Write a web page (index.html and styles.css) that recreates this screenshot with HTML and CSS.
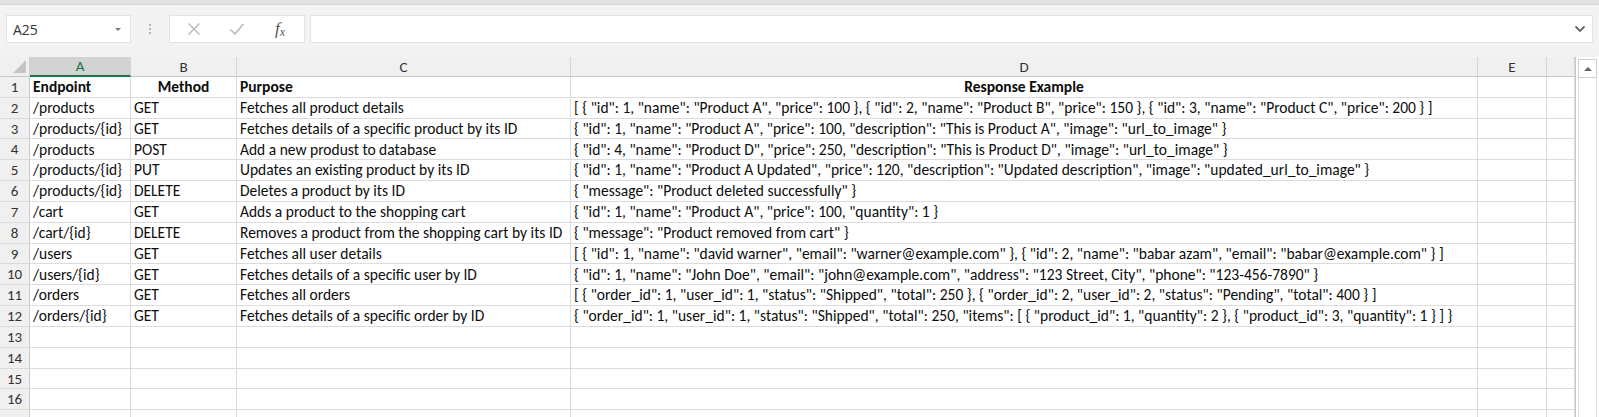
FILE: index.html
```html
<!DOCTYPE html>
<html>
<head>
<meta charset="utf-8">
<link rel="stylesheet" href="styles.css">
</head>
<body>
<div class="app">
  <div class="topstrip"></div>
  <div class="fbar">
    <div class="namebox"><span class="nb-text">A25</span><span class="nb-arrow"></span></div>
    <div class="dots"><i></i><i></i><i></i></div>
    <div class="tools">
      <svg class="ico" width="14" height="14" viewBox="0 0 14 14"><path d="M1.5 1.5 L12.5 12.5 M12.5 1.5 L1.5 12.5" stroke="#b3b3b3" stroke-width="1.3" fill="none"/></svg>
      <svg class="ico" width="16" height="14" viewBox="0 0 16 14"><path d="M1.5 7.5 L6 12 L14.5 2" stroke="#b3b3b3" stroke-width="1.4" fill="none"/></svg>
      <span class="fx">f<sub>x</sub></span>
    </div>
    <div class="finput">
      <svg class="chev" width="12" height="8" viewBox="0 0 12 8"><path d="M1.5 1.5 L6 6 L10.5 1.5" stroke="#666" stroke-width="1.8" fill="none"/></svg>
    </div>
  </div>
  <div class="gridwrap">
    <div class="sheet">
      <div class="corner"><span class="tri"></span></div>
      <div class="ch sel">A</div>
      <div class="ch">B</div>
      <div class="ch">C</div>
      <div class="ch">D</div>
      <div class="ch">E</div>
      <div class="ch"></div>

      <div class="rh">1</div><div class="c b">Endpoint</div><div class="c b ctr">Method</div><div class="c b">Purpose</div><div class="c b ctr">Response Example</div><div class="c"></div><div class="c"></div>
      <div class="rh">2</div><div class="c">/products</div><div class="c">GET</div><div class="c">Fetches all product details</div><div class="c">[ { "id": 1, "name": "Product A", "price": 100 }, { "id": 2, "name": "Product B", "price": 150 }, { "id": 3, "name": "Product C", "price": 200 } ]</div><div class="c"></div><div class="c"></div>
      <div class="rh">3</div><div class="c">/products/{id}</div><div class="c">GET</div><div class="c">Fetches details of a specific product by its ID</div><div class="c">{ "id": 1, "name": "Product A", "price": 100, "description": "This is Product A", "image": "url_to_image" }</div><div class="c"></div><div class="c"></div>
      <div class="rh">4</div><div class="c">/products</div><div class="c">POST</div><div class="c">Add a new produst to database</div><div class="c">{ "id": 4, "name": "Product D", "price": 250, "description": "This is Product D", "image": "url_to_image" }</div><div class="c"></div><div class="c"></div>
      <div class="rh">5</div><div class="c">/products/{id}</div><div class="c">PUT</div><div class="c">Updates an existing product by its ID</div><div class="c">{ "id": 1, "name": "Product A Updated", "price": 120, "description": "Updated description", "image": "updated_url_to_image" }</div><div class="c"></div><div class="c"></div>
      <div class="rh">6</div><div class="c">/products/{id}</div><div class="c">DELETE</div><div class="c">Deletes a product by its ID</div><div class="c">{ "message": "Product deleted successfully" }</div><div class="c"></div><div class="c"></div>
      <div class="rh">7</div><div class="c">/cart</div><div class="c">GET</div><div class="c">Adds a product to the shopping cart</div><div class="c">{ "id": 1, "name": "Product A", "price": 100, "quantity": 1 }</div><div class="c"></div><div class="c"></div>
      <div class="rh">8</div><div class="c">/cart/{id}</div><div class="c">DELETE</div><div class="c">Removes a product from the shopping cart by its ID</div><div class="c">{ "message": "Product removed from cart" }</div><div class="c"></div><div class="c"></div>
      <div class="rh">9</div><div class="c">/users</div><div class="c">GET</div><div class="c">Fetches all user details</div><div class="c">[ { "id": 1, "name": "david warner", "email": "warner@example.com" }, { "id": 2, "name": "babar azam", "email": "babar@example.com" } ]</div><div class="c"></div><div class="c"></div>
      <div class="rh">10</div><div class="c">/users/{id}</div><div class="c">GET</div><div class="c">Fetches details of a specific user by ID</div><div class="c">{ "id": 1, "name": "John Doe", "email": "john@example.com", "address": "123 Street, City", "phone": "123-456-7890" }</div><div class="c"></div><div class="c"></div>
      <div class="rh">11</div><div class="c">/orders</div><div class="c">GET</div><div class="c">Fetches all orders</div><div class="c">[ { "order_id": 1, "user_id": 1, "status": "Shipped", "total": 250 }, { "order_id": 2, "user_id": 2, "status": "Pending", "total": 400 } ]</div><div class="c"></div><div class="c"></div>
      <div class="rh">12</div><div class="c">/orders/{id}</div><div class="c">GET</div><div class="c">Fetches details of a specific order by ID</div><div class="c">{ "order_id": 1, "user_id": 1, "status": "Shipped", "total": 250, "items": [ { "product_id": 1, "quantity": 2 }, { "product_id": 3, "quantity": 1 } ] }</div><div class="c"></div><div class="c"></div>
      <div class="rh">13</div><div class="c"></div><div class="c"></div><div class="c"></div><div class="c"></div><div class="c"></div><div class="c"></div>
      <div class="rh">14</div><div class="c"></div><div class="c"></div><div class="c"></div><div class="c"></div><div class="c"></div><div class="c"></div>
      <div class="rh">15</div><div class="c"></div><div class="c"></div><div class="c"></div><div class="c"></div><div class="c"></div><div class="c"></div>
      <div class="rh">16</div><div class="c"></div><div class="c"></div><div class="c"></div><div class="c"></div><div class="c"></div><div class="c"></div>
      <div class="rh"></div><div class="c"></div><div class="c"></div><div class="c"></div><div class="c"></div><div class="c"></div><div class="c"></div>
    </div>
    <div class="vscroll">
      <div class="sbtn"><span class="up"></span></div>
      <div class="track"></div>
    </div>
  </div>
</div>
</body>
</html>
```

FILE: styles.css
```css
* { box-sizing: border-box; }
html, body { margin: 0; padding: 0; }
body {
  width: 1599px;
  height: 417px;
  overflow: hidden;
  background: #f3f3f3;
  font-family: Carlito, Lato, "Liberation Sans", sans-serif;
}
.app { display: flex; flex-direction: column; }
.topstrip {
  height: 5px;
  background: #e2e2e2;
  border-bottom: 1px solid #d6d6d6;
}
.fbar {
  display: flex;
  align-items: stretch;
  height: 28px;
  margin-top: 10px;
  padding-left: 6px;
  padding-right: 6px;
}
.namebox {
  width: 125px;
  background: #fff;
  border: 1px solid #e3e3e3;
  display: flex;
  align-items: center;
  justify-content: space-between;
  padding: 0 9px 0 6px;
}
.nb-text {
  font-family: "Open Sans", "Noto Sans", sans-serif;
  font-size: 14px;
  color: #333;
}
.nb-arrow {
  width: 0; height: 0;
  border-left: 3px solid transparent;
  border-right: 3px solid transparent;
  border-top: 3px solid #777;
}
.dots {
  width: 38px;
  display: flex;
  flex-direction: column;
  align-items: center;
  justify-content: center;
  gap: 2px;
}
.dots i {
  display: block;
  width: 2px; height: 2px;
  background: #b5b5b5;
}
.tools {
  width: 136px;
  background: #fff;
  border: 1px solid #e3e3e3;
  display: flex;
  align-items: center;
  padding-left: 17px;
  gap: 28px;
}
.fx {
  font-family: "Liberation Serif", "DejaVu Serif", serif;
  font-style: italic;
  font-size: 17px;
  color: #555;
  line-height: 1;
  margin-left: 2px;
}
.fx sub { font-size: 12px; vertical-align: -2px; }
.finput {
  flex: 1;
  margin-left: 5px;
  background: #fff;
  border: 1px solid #e3e3e3;
  display: flex;
  align-items: center;
  justify-content: flex-end;
  padding-right: 6px;
}
.gridwrap {
  display: flex;
  margin-top: 14px;
}
.sheet {
  width: 1575px;
  display: grid;
  grid-template-columns: 30px 101px 106px 334px 907px 69px 28px;
  grid-template-rows: 20px repeat(17, 20.83px);
  background: #fff;
  font-size: 15.5px;
  color: #0d0d0d;
}
.corner {
  background: #f0f0f0;
  border-right: 1px solid #d0d0d0;
  border-bottom: 1px solid #c8c8c8;
  position: relative;
}
.tri {
  position: absolute;
  right: 3px;
  bottom: 3px;
  width: 0; height: 0;
  border-left: 13px solid transparent;
  border-bottom: 13px solid #c4c4c4;
}
.ch {
  background: #f0f0f0;
  border-right: 1px solid #d5d5d5;
  border-bottom: 1px solid #c8c8c8;
  display: flex;
  align-items: center;
  justify-content: center;
  color: #333;
  font-size: 15px;
}
.ch.sel {
  background: #d3d3d3;
  color: #217346;
  border-bottom: 2px solid #217346;
}
.rh {
  background: #f0f0f0;
  border-right: 1px solid #c8c8c8;
  border-bottom: 1px solid #dadada;
  display: flex;
  align-items: center;
  justify-content: center;
  color: #333;
  font-size: 15px;
}
.c {
  border-right: 1px solid #dcdcdc;
  border-bottom: 1px solid #dcdcdc;
  white-space: nowrap;
  overflow: visible;
  padding-left: 3px;
  display: flex;
  align-items: center;
  line-height: 1;
}
.c.b { font-weight: bold; }
.c.ctr { justify-content: center; padding-left: 0; }
.vscroll {
  flex: 1;
  background: #fff;
  border-left: 1px solid #c8c8c8;
  display: flex;
  flex-direction: column;
  padding: 2px 2px 0 2px;
}
.sbtn {
  height: 19px;
  border: 1px solid #cfcfcf;
  background: #fff;
  display: flex;
  align-items: center;
  justify-content: center;
}
.up {
  width: 0; height: 0;
  border-left: 4px solid transparent;
  border-right: 4px solid transparent;
  border-bottom: 4px solid #666;
}
.track {
  flex: 1;
  border-left: 1px solid #e0e0e0;
  border-right: 1px solid #e0e0e0;
}
```
